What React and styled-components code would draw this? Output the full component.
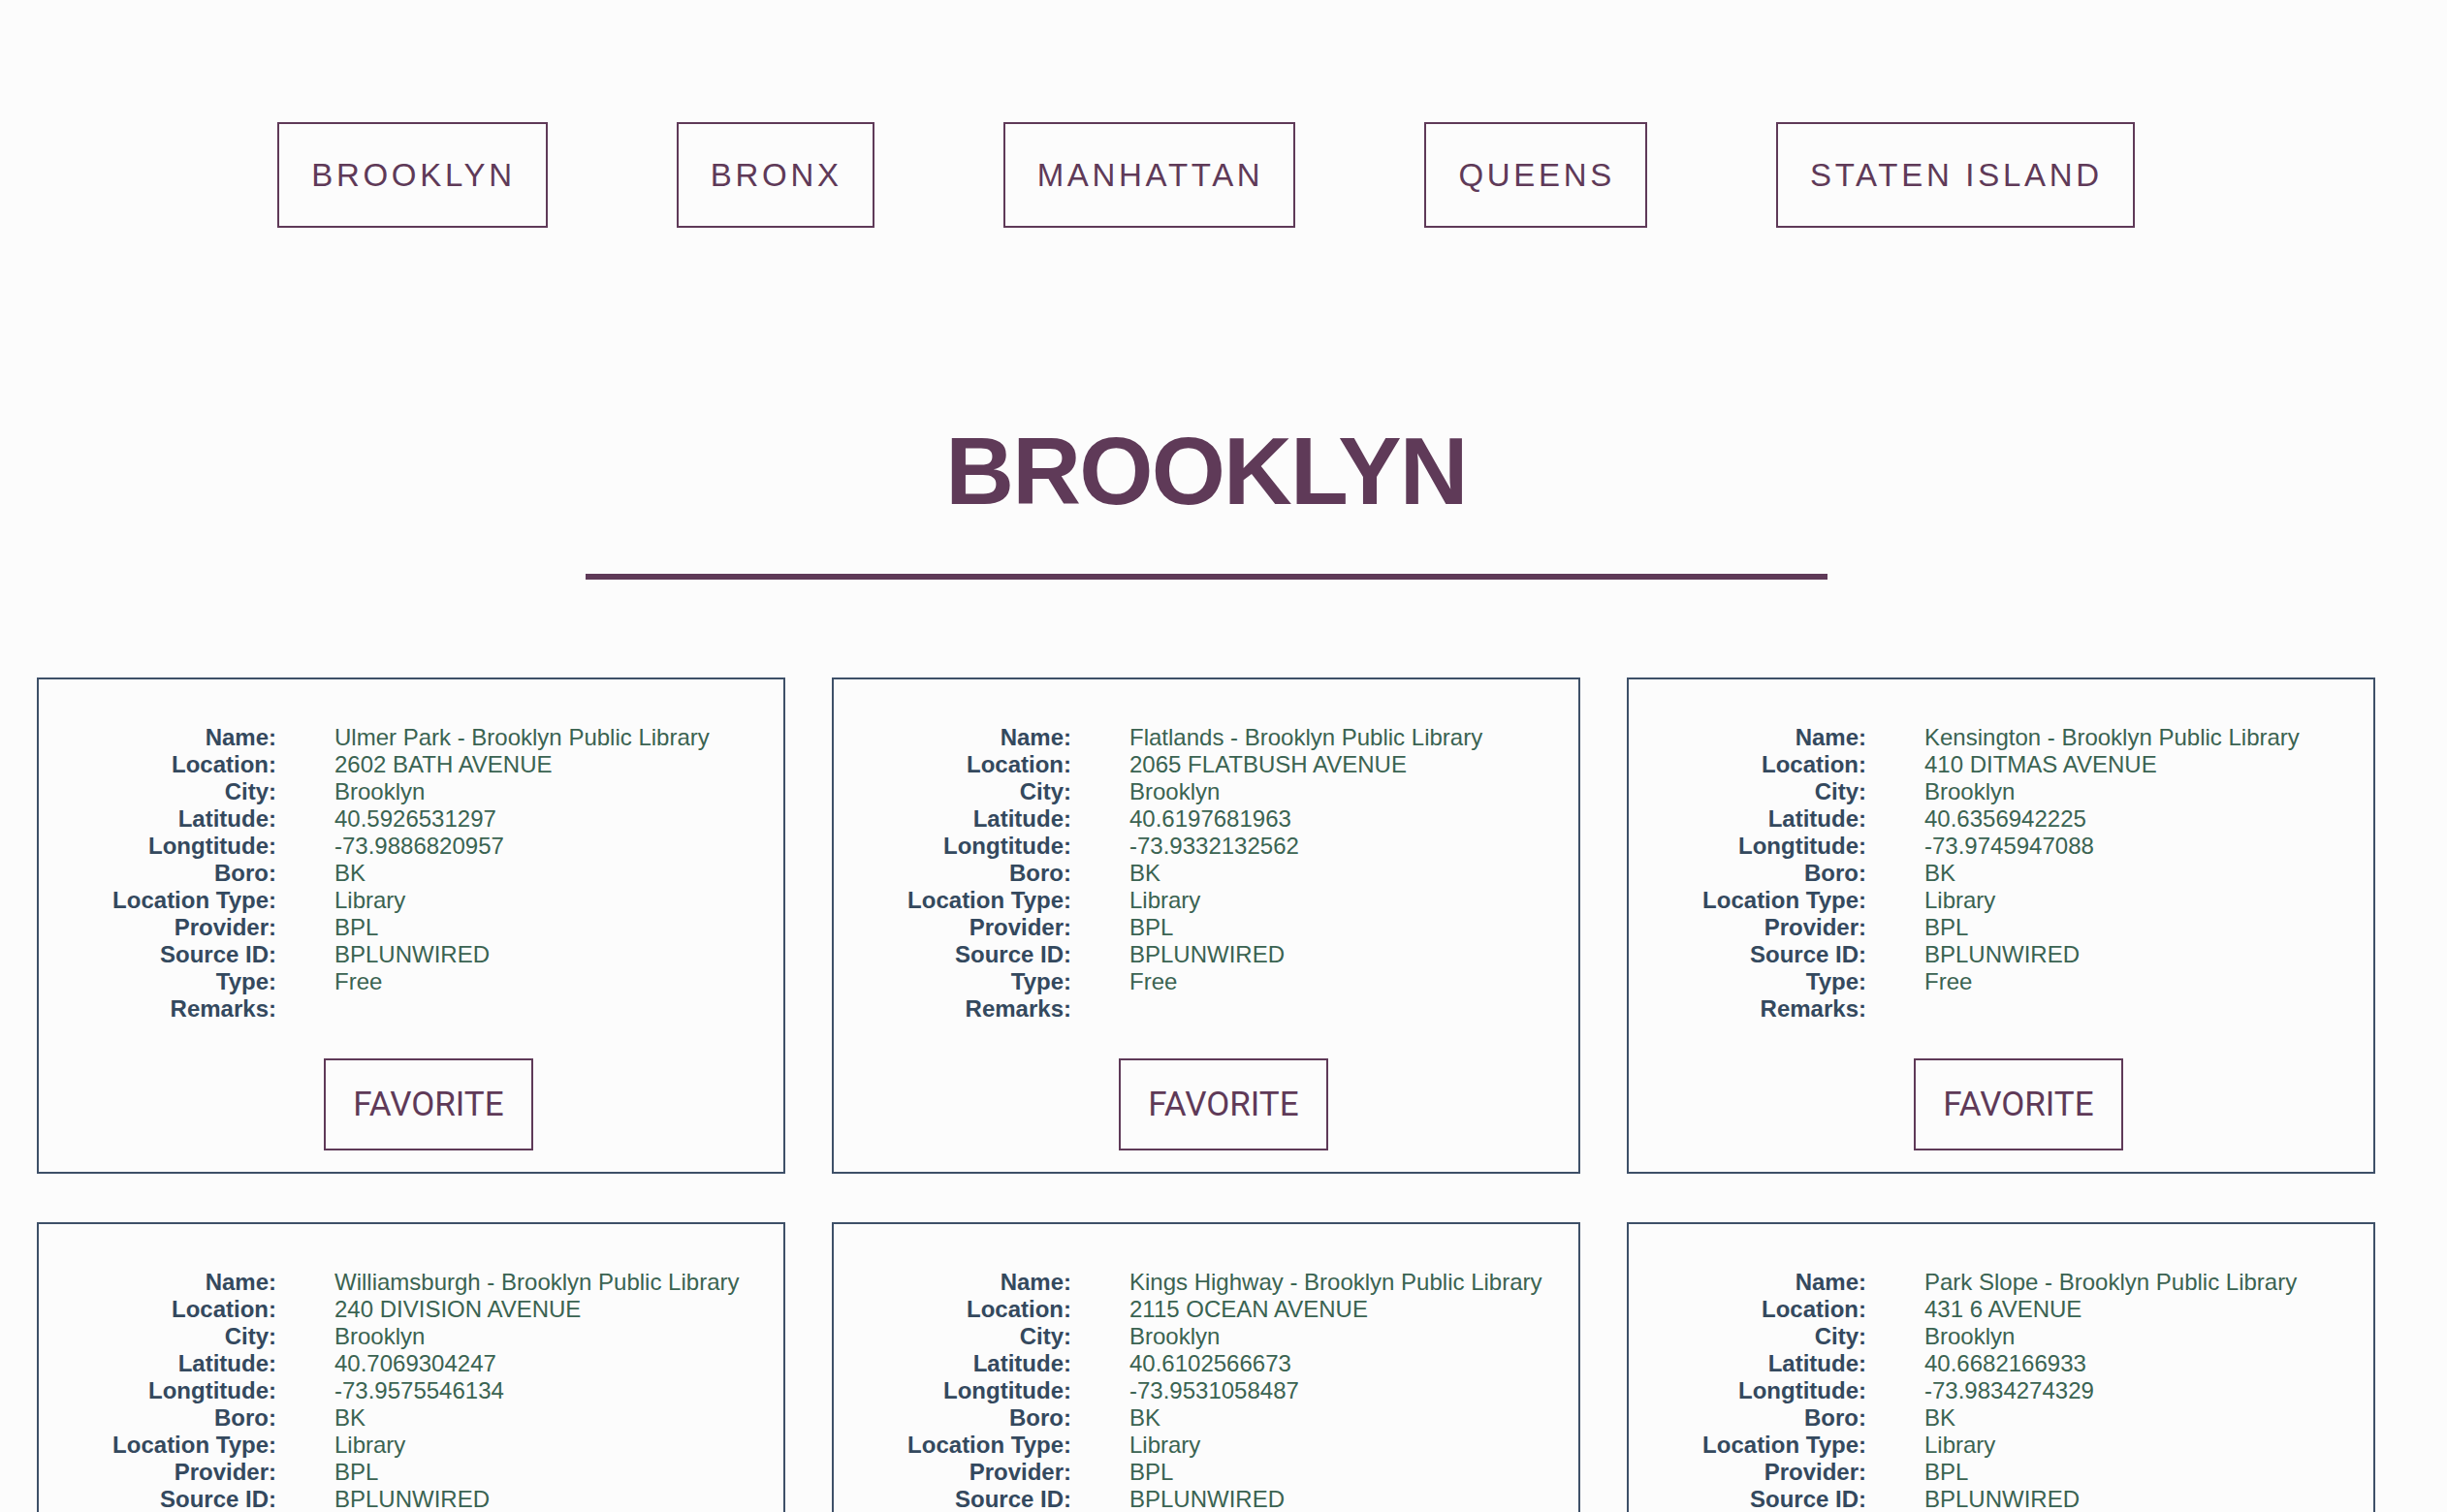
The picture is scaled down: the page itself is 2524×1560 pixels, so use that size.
import React from 'react';
import styled, { createGlobalStyle } from 'styled-components';

const boroughs = ['BROOKLYN', 'BRONX', 'MANHATTAN', 'QUEENS', 'STATEN ISLAND'];

const hotspots = [
  { name: 'Ulmer Park - Brooklyn Public Library', location: '2602 BATH AVENUE', lat: '40.5926531297', lon: '-73.9886820957' },
  { name: 'Flatlands - Brooklyn Public Library', location: '2065 FLATBUSH AVENUE', lat: '40.6197681963', lon: '-73.9332132562' },
  { name: 'Kensington - Brooklyn Public Library', location: '410 DITMAS AVENUE', lat: '40.6356942225', lon: '-73.9745947088' },
  { name: 'Williamsburgh - Brooklyn Public Library', location: '240 DIVISION AVENUE', lat: '40.7069304247', lon: '-73.9575546134' },
  { name: 'Kings Highway - Brooklyn Public Library', location: '2115 OCEAN AVENUE', lat: '40.6102566673', lon: '-73.9531058487' },
  { name: 'Park Slope - Brooklyn Public Library', location: '431 6 AVENUE', lat: '40.6682166933', lon: '-73.9834274329' },
];

const purple = '#5f3a58';

const GlobalStyle = createGlobalStyle`
  body {
    margin: 0;
    background: #fcfcfc;
    font-family: 'Liberation Sans', Arial, sans-serif;
  }
`;

const Page = styled.div`
  width: 2488px;
  box-sizing: border-box;
  padding: 126px 38px 60px 38px;
`;

const Nav = styled.nav`
  display: flex;
  justify-content: center;
  gap: 133px;
`;

const NavButton = styled.button`
  display: inline-flex;
  align-items: center;
  height: 109px;
  padding: 0 31px 0 33px;
  border: 2px solid ${purple};
  background: transparent;
  color: ${purple};
  font-family: 'Liberation Sans', Arial, sans-serif;
  font-size: 33px;
  letter-spacing: 3.7px;
  cursor: pointer;
`;

const Title = styled.h1`
  margin: 202px 0 0 0;
  text-align: center;
  color: ${purple};
  font-size: 98px;
  line-height: 1;
  font-weight: bold;
  letter-spacing: -1.8px;
`;

const Rule = styled.hr`
  width: 1281px;
  height: 6px;
  margin: 57px auto 0 auto;
  border: none;
  background: ${purple};
`;

const CardsGrid = styled.section`
  display: grid;
  grid-template-columns: repeat(3, 772px);
  column-gap: 48px;
  row-gap: 50px;
  margin-top: 101px;
`;

const Card = styled.article`
  display: flex;
  flex-direction: column;
  box-sizing: border-box;
  height: 512px;
  padding: 46px 0 22px 0;
  border: 2px solid #3e5068;
`;

const InfoGrid = styled.dl`
  display: grid;
  grid-template-columns: 245px 1fr;
  column-gap: 60px;
  margin: 0;
  font-size: 24px;
  line-height: 28px;
`;

const Label = styled.dt`
  text-align: right;
  font-weight: bold;
  color: #34495e;
`;

const Value = styled.dd`
  margin: 0;
  white-space: nowrap;
  color: #3a6351;
`;

const FavButton = styled.button`
  align-self: center;
  display: inline-flex;
  align-items: center;
  height: 95px;
  margin: 37px 0 0 36px;
  padding: 0 28px;
  border: 2px solid ${purple};
  background: transparent;
  color: ${purple};
  font-family: Roboto, 'Liberation Sans', sans-serif;
  font-size: 35px;
  cursor: pointer;
`;

function HotspotCard({ spot }) {
  const rows = [
    ['Name:', spot.name],
    ['Location:', spot.location],
    ['City:', 'Brooklyn'],
    ['Latitude:', spot.lat],
    ['Longtitude:', spot.lon],
    ['Boro:', 'BK'],
    ['Location Type:', 'Library'],
    ['Provider:', 'BPL'],
    ['Source ID:', 'BPLUNWIRED'],
    ['Type:', 'Free'],
    ['Remarks:', ''],
  ];
  return (
    <Card>
      <InfoGrid>
        {rows.map(([label, value]) => (
          <React.Fragment key={label}>
            <Label>{label}</Label>
            <Value>{value}</Value>
          </React.Fragment>
        ))}
      </InfoGrid>
      <FavButton>FAVORITE</FavButton>
    </Card>
  );
}

export default function App() {
  return (
    <>
      <GlobalStyle />
      <Page>
        <Nav>
          {boroughs.map((b) => (
            <NavButton key={b}>{b}</NavButton>
          ))}
        </Nav>
        <Title>BROOKLYN</Title>
        <Rule />
        <CardsGrid>
          {hotspots.map((s) => (
            <HotspotCard key={s.name} spot={s} />
          ))}
        </CardsGrid>
      </Page>
    </>
  );
}
